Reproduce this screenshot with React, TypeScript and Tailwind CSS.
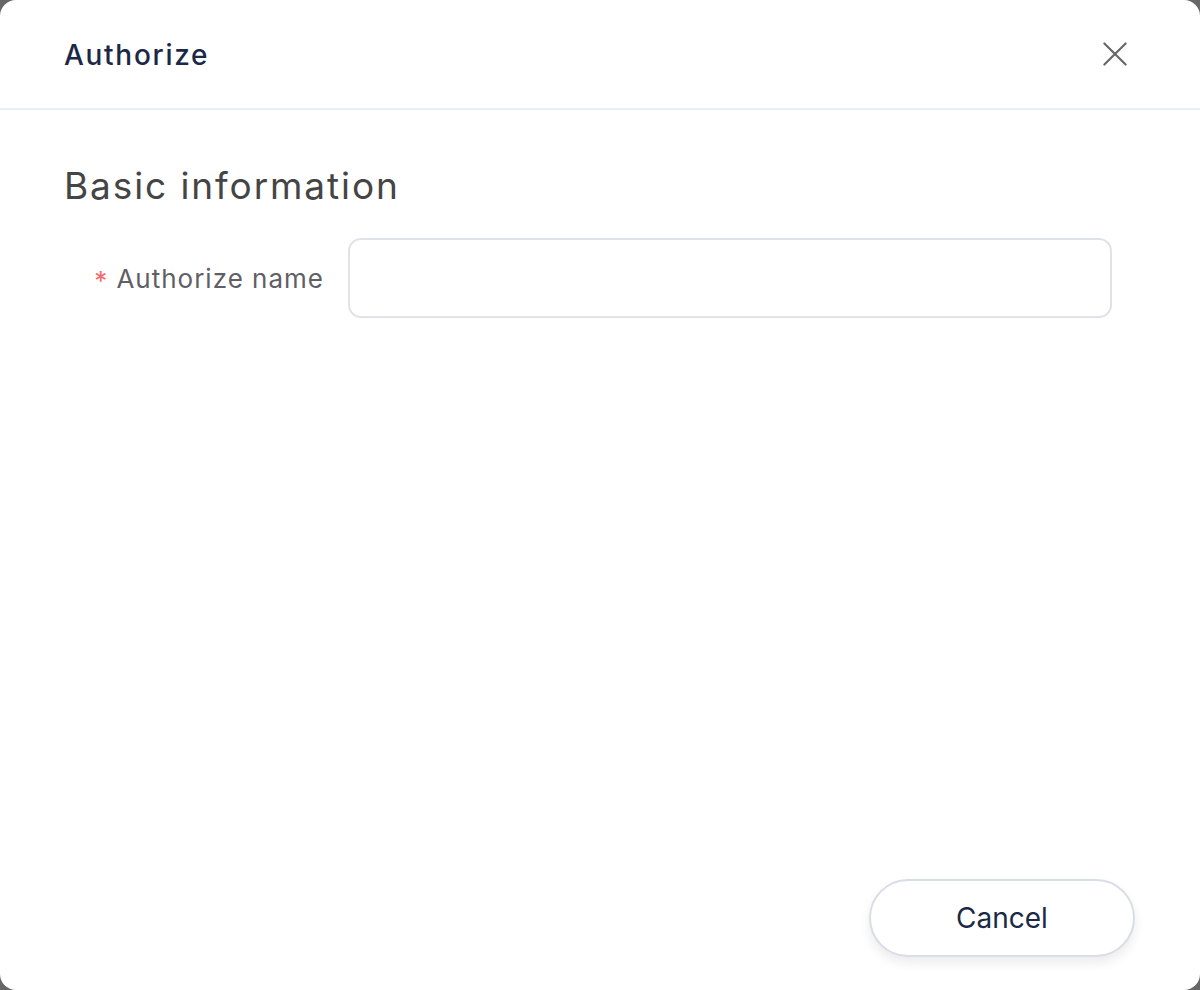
import React from 'react';

const font = { fontFamily: 'Inter, "Noto Sans", sans-serif' };

export default function App() {
  return (
    <div className="w-[1200px] h-[990px] bg-[#666666]" style={font}>
      <div className="w-full h-full bg-white rounded-[16px] flex flex-col">
        <header className="h-[110px] shrink-0 flex items-center justify-between pl-16 pr-[73px] border-b-2 border-[#e9eef4]">
          <h1 className="text-[28px] font-medium text-[#1b2946] tracking-[1.7px] pt-[2px]">Authorize</h1>
          <button className="w-6 h-6 flex items-center justify-center text-[#666666]">
            <svg width="26" height="26" viewBox="0 0 26 26" fill="none" stroke="currentColor" strokeWidth="2.3" strokeLinecap="round">
              <path d="M1.5 1.5L24.5 24.5M24.5 1.5L1.5 24.5" />
            </svg>
          </button>
        </header>

        <section className="flex-1 px-16 pt-[54px]">
          <h2 className="text-[37px] text-[#454545] leading-[44px] tracking-[1.9px]">Basic information</h2>
          <div className="flex items-center mt-[30px]">
            <label className="w-[284px] shrink-0 flex items-center justify-end pr-[24px] text-[26px] text-[#5f6066] tracking-[1px]">
              <span className="text-[#f56c6c] mr-[8px] mt-[4px]">*</span>
              Authorize name
            </label>
            <div className="w-[764px] h-[80px] rounded-[13px] border-2 border-[#dfe2e8] bg-white" />
          </div>
        </section>

        <footer className="flex justify-end pr-[65px] pb-[33px]">
          <button className="w-[266px] h-[78px] rounded-full border-2 border-[#d9dde5] bg-white text-[28px] text-[#1b2946] shadow-[0_6px_12px_rgba(0,0,0,0.08)]">
            Cancel
          </button>
        </footer>
      </div>
    </div>
  );
}
